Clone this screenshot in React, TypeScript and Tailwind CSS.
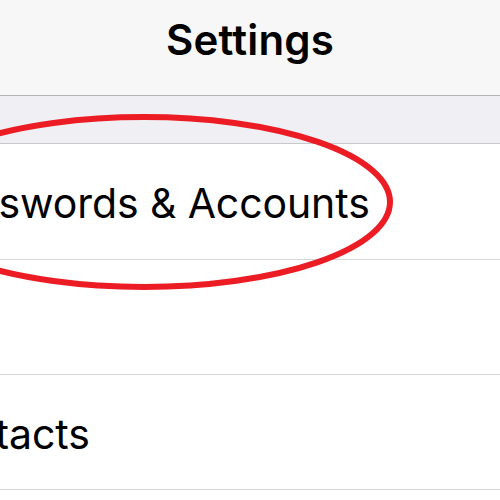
const rows = [
  { label: "Passwords & Accounts", height: "h-[116px]", offset: "ml-[-72px]" },
  { label: "Mail", height: "h-[115px]", offset: "ml-[-96px]" },
  { label: "Contacts", height: "h-[115px]", offset: "ml-[-83px]" },
];

export default function App() {
  return (
    <div
      className="relative h-[500px] w-[500px] overflow-hidden bg-white text-black"
      style={{ fontFamily: "Inter, 'Noto Sans', sans-serif" }}
    >
      <header className="flex h-[96px] items-start justify-center border-b border-[#b4b4b4] bg-[#f7f7f7] pt-[16px]">
        <h1 className="text-[42px] font-semibold leading-[48px] tracking-[0.2px]">Settings</h1>
      </header>

      <div className="h-[48px] border-b border-[#c8c7cc] bg-[#efeff4]" />

      <ul>
        {rows.map((row) => (
          <li
            key={row.label}
            className={`flex items-center border-b border-[#d6d6d6] ${row.height}`}
          >
            <span
              className={`whitespace-nowrap pt-[4px] text-[41px] leading-none tracking-[-0.1px] ${row.offset}`}
            >
              {row.label}
            </span>
          </li>
        ))}
      </ul>

      {/* red highlight drawn over the row */}
      <svg
        className="pointer-events-none absolute left-0 top-0"
        width="500"
        height="500"
        viewBox="0 0 500 500"
      >
        <ellipse cx="144" cy="202" rx="246" ry="85" fill="none" stroke="#ec1c24" strokeWidth="6" />
      </svg>
    </div>
  );
}
